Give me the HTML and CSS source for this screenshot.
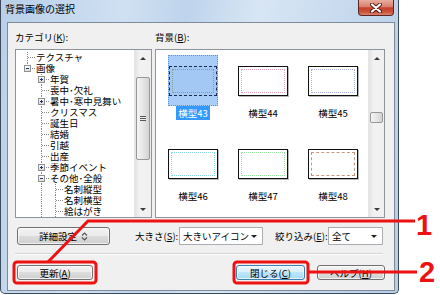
FILE: index.html
```html
<!DOCTYPE html>
<html lang="ja">
<head>
  <meta charset="UTF-8" />
  <title>背景画像の選択</title>
  <link rel="stylesheet" href="styles.css">
</head>
<body>
  <div class="window">
    <div class="titlebar">
      <span class="title">背景画像の選択</span>
      <span class="close">
        <svg width="14" height="10" viewBox="0 0 14 10"><path d="M3 1.5 L11 8.5 M11 1.5 L3 8.5" stroke="#4a1a14" stroke-width="4" stroke-linecap="round"/><path d="M3 1.5 L11 8.5 M11 1.5 L3 8.5" stroke="#fff" stroke-width="2.2" stroke-linecap="round"/></svg>
      </span>
    </div>

    <div class="client">
      <div class="panes">
        <div class="pane">
          <div class="label">カテゴリ(<u>K</u>):</div>
          <div class="box">
            <div class="tree">
              <div class="row"><i class="g tee"></i><span>テクスチャ</span></div>
              <div class="row"><i class="g end"><b class="exp minus"></b></i><span>画像</span></div>
              <div class="row"><i class="g"></i><i class="g tee"><b class="exp plus"></b></i><span>年賀</span></div>
              <div class="row"><i class="g"></i><i class="g tee"></i><span>喪中･欠礼</span></div>
              <div class="row"><i class="g"></i><i class="g tee"><b class="exp plus"></b></i><span>暑中･寒中見舞い</span></div>
              <div class="row"><i class="g"></i><i class="g tee"></i><span>クリスマス</span></div>
              <div class="row"><i class="g"></i><i class="g tee"></i><span>誕生日</span></div>
              <div class="row"><i class="g"></i><i class="g tee"></i><span>結婚</span></div>
              <div class="row"><i class="g"></i><i class="g tee"></i><span>引越</span></div>
              <div class="row"><i class="g"></i><i class="g tee"></i><span>出産</span></div>
              <div class="row"><i class="g"></i><i class="g tee"><b class="exp plus"></b></i><span>季節イベント</span></div>
              <div class="row"><i class="g"></i><i class="g tee"><b class="exp minus"></b></i><span>その他･全般</span></div>
              <div class="row"><i class="g"></i><i class="g pipe"></i><i class="g tee"></i><span>名刺縦型</span></div>
              <div class="row"><i class="g"></i><i class="g pipe"></i><i class="g tee"></i><span>名刺横型</span></div>
              <div class="row"><i class="g"></i><i class="g pipe"></i><i class="g tee"></i><span>絵はがき</span></div>
            </div>
            <div class="vscroll wide">
              <span class="arrow up"></span>
              <span class="track"><span class="thumb tree-thumb"><span class="grip"></span></span></span>
              <span class="arrow down"></span>
            </div>
          </div>
        </div>

        <div class="pane">
          <div class="label">背景(<u>B</u>):</div>
          <div class="box">
            <div class="thumbs">
              <div class="item sel">
                <div class="pic"><div class="frame"><span class="deco c43"></span></div></div>
                <div class="cap"><span>横型43</span></div>
              </div>
              <div class="item">
                <div class="pic"><div class="frame"><span class="deco c44"></span></div></div>
                <div class="cap"><span>横型44</span></div>
              </div>
              <div class="item">
                <div class="pic"><div class="frame"><span class="deco c45"></span></div></div>
                <div class="cap"><span>横型45</span></div>
              </div>
              <div class="item">
                <div class="pic"><div class="frame"><span class="deco c46"></span></div></div>
                <div class="cap"><span>横型46</span></div>
              </div>
              <div class="item">
                <div class="pic"><div class="frame"><span class="deco c47"></span></div></div>
                <div class="cap"><span>横型47</span></div>
              </div>
              <div class="item">
                <div class="pic"><div class="frame"><span class="deco c48"></span></div></div>
                <div class="cap"><span>横型48</span></div>
              </div>
            </div>
            <div class="vscroll">
              <span class="arrow up"></span>
              <span class="track"><span class="thumb list-thumb"></span></span>
              <span class="arrow down"></span>
            </div>
          </div>
        </div>
      </div>

      <div class="controls">
        <button class="btn btn-detail"><span>詳細設定</span>
          <svg width="7" height="9" viewBox="0 0 7 9"><path d="M1 3.5 L3.5 1 L6 3.5 M1 5.5 L3.5 8 L6 5.5" fill="none" stroke="#555" stroke-width="1.2"/></svg>
        </button>
        <span class="ctl-label">大きさ(<u>S</u>):</span>
        <span class="combo size"><span>大きいアイコン</span><i class="caret"></i></span>
        <span class="ctl-label filter">絞り込み(<u>E</u>):</span>
        <span class="combo filter-combo"><span>全て</span><i class="caret"></i></span>
      </div>

      <div class="separator"></div>

      <div class="actions">
        <button class="btn btn-refresh"><span>更新(<u>A</u>)</span></button>
        <button class="btn default btn-close"><span>閉じる(<u>C</u>)</span></button>
        <button class="btn btn-help"><span>ヘルプ(<u>H</u>)</span></button>
      </div>
    </div>
  </div>

  <!-- annotation marks -->
  <svg class="marks" width="440" height="295" viewBox="0 0 440 295">
    <rect x="14" y="262" width="82" height="21" rx="3" fill="none" stroke="#ee1111" stroke-width="3"/>
    <rect x="234" y="262" width="74" height="21" rx="3" fill="none" stroke="#ee1111" stroke-width="3"/>
    <polyline points="48,262 88,221 415,221" fill="none" stroke="#ee1111" stroke-width="3"/>
    <line x1="308" y1="272" x2="417" y2="272" stroke="#ee1111" stroke-width="3"/>
  </svg>
  <span class="num num-1">1</span>
  <span class="num num-2">2</span>
</body>
</html>
```

FILE: styles.css
```css
body {
  margin: 0;
  width: 440px;
  height: 295px;
  background: #fff;
  position: relative;
  overflow: hidden;
  font-family: "Noto Sans CJK JP", sans-serif;
  font-size: 9.5px;
  color: #000;
}
u {
  text-decoration: underline;
}
.window {
  width: 399px;
  height: 294px;
  box-sizing: border-box;
  border: 1px solid #3e4b5c;
  border-top: 0;
  border-radius: 0 0 5px 5px;
  background: linear-gradient(100deg, #b9cfe9 0%, #cfe0f2 28%, #bed4ec 42%, #d8e6f4 58%, #c6d9ee 78%, #b6cde8 100%);
}
.titlebar {
  height: 22px;
  display: flex;
  justify-content: space-between;
  align-items: flex-start;
  padding: 0 4px 0 4px;
}
.title {
  margin-top: 2px;
  font-size: 10px;
  line-height: 13px;
}
.close {
  width: 36px;
  height: 16px;
  box-sizing: border-box;
  border: 1px solid #5b2520;
  border-top: 0;
  border-radius: 0 0 4px 4px;
  background: linear-gradient(#e8ad9f 0%, #d8806d 45%, #c3412a 52%, #c9533c 80%, #dd8570 100%);
  display: flex;
  align-items: center;
  justify-content: center;
}
.client {
  margin: 0 3px 0 6px;
  height: 269px;
  box-sizing: border-box;
  border: 1px solid #7d8a99;
  background: #f0f0f0;
  padding: 8px 9px 0 7px;
}
.panes {
  display: grid;
  grid-template-columns: 137px 230px;
  column-gap: 3px;
}
.label {
  height: 18px;
  line-height: 12px;
}
.box {
  height: 169px;
  box-sizing: border-box;
  border: 1px solid #8e949c;
  background: #fff;
  display: flex;
}

/* tree */
.tree {
  flex: 1;
  overflow: hidden;
  padding: 2px 0 0 5px;
}
.row {
  display: flex;
  height: 11px;
  line-height: 11px;
  white-space: nowrap;
}
.row span {
  margin-left: 1px;
}
.g {
  flex: none;
  width: 14px;
  height: 11px;
  position: relative;
}
.g.tee {
  background:
    repeating-linear-gradient(to bottom, #8a8a8a 0 1px, transparent 1px 2px) 6px 0 / 1px 11px no-repeat,
    repeating-linear-gradient(to right, #8a8a8a 0 1px, transparent 1px 2px) 7px 5px / 7px 1px no-repeat;
}
.g.end {
  background:
    repeating-linear-gradient(to bottom, #8a8a8a 0 1px, transparent 1px 2px) 6px 0 / 1px 6px no-repeat,
    repeating-linear-gradient(to right, #8a8a8a 0 1px, transparent 1px 2px) 7px 5px / 7px 1px no-repeat;
}
.g.pipe {
  background: repeating-linear-gradient(to bottom, #8a8a8a 0 1px, transparent 1px 2px) 6px 0 / 1px 11px no-repeat;
}
.exp {
  position: absolute;
  left: 3px;
  top: 2px;
  width: 7px;
  height: 7px;
  box-sizing: border-box;
  border: 1px solid #8f8f8f;
  background: linear-gradient(#fff, #dcdcdc);
}
.exp::before,
.exp::after {
  content: "";
  position: absolute;
  background: #1f3a70;
}
.exp::before {
  left: 1px;
  top: 2px;
  width: 3px;
  height: 1px;
}
.exp.plus::after {
  left: 2px;
  top: 1px;
  width: 1px;
  height: 3px;
}

/* scrollbars */
.vscroll {
  flex: none;
  width: 15px;
  display: flex;
  flex-direction: column;
  background: linear-gradient(to right, #e2e2e2, #f2f2f2 30%, #f0f0f0);
  border-left: 1px solid #e6e6e6;
}
.vscroll.wide {
  width: 16px;
}
.arrow {
  height: 16px;
  flex: none;
  display: flex;
  align-items: center;
  justify-content: center;
}
.arrow::before {
  content: "";
  border-left: 3px solid transparent;
  border-right: 3px solid transparent;
}
.arrow.up::before {
  border-bottom: 3px solid #3a3a3a;
}
.arrow.down::before {
  border-top: 3px solid #3a3a3a;
}
.track {
  flex: 1;
  display: block;
}
.thumb {
  display: flex;
  align-items: center;
  justify-content: center;
  margin: 0 1px;
  box-sizing: border-box;
  border: 1px solid #979797;
  border-radius: 2px;
  background: linear-gradient(to right, #f4f4f4, #e6e6e6 50%, #d3d3d3);
}
.tree-thumb {
  margin-top: 11px;
  height: 83px;
}
.list-thumb {
  margin-top: 46px;
  height: 11px;
}
.grip {
  width: 6px;
  height: 5px;
  background: repeating-linear-gradient(to bottom, #555 0 1px, #eee 1px 2px);
}

/* thumbnails */
.thumbs {
  flex: 1;
  display: grid;
  grid-template-columns: repeat(3, 70px);
  grid-auto-rows: 83px;
  align-content: start;
  padding: 5px 0 0 2px;
  overflow: hidden;
}
.item {
  display: flex;
  flex-direction: column;
  align-items: center;
}
.pic {
  width: 50px;
  height: 51px;
  box-sizing: border-box;
  display: flex;
  align-items: center;
  justify-content: center;
}
.frame {
  width: 50px;
  height: 30px;
  box-sizing: border-box;
  border: 1px solid #111;
  background: #fff;
  padding: 2px;
  box-shadow: 1px 1px 0 #b8b8b8;
}
.deco {
  display: block;
  height: 100%;
  box-sizing: border-box;
  border: 1px dotted #ccc;
}
.c43 { border-color: #7fa08a; }
.c44 { border-color: #f0a0b8; }
.c45 { border-color: #aaaee6; }
.c46 { border-color: #86dede; }
.c47 { border-color: #98e49a; }
.c48 { border-color: #c8987e; border-style: dashed; }
.cap {
  margin-top: 2px;
  line-height: 11px;
}
.cap span {
  padding: 0 2px;
}
.item.sel .pic {
  background: #a9cdf6;
  border: 1px dotted #5f93d8;
}
.item.sel .frame {
  background: #a3c8f3;
  border: 1px dashed #1c2c50;
  box-shadow: none;
}
.item.sel .cap span {
  background: #3399ff;
  color: #fff;
}

/* bottom controls */
.controls {
  display: flex;
  align-items: center;
  height: 18px;
  margin-top: 9px;
}
.btn {
  box-sizing: border-box;
  border: 1px solid #707070;
  border-radius: 3px;
  background: linear-gradient(#f2f2f2 0%, #ebebeb 49%, #dddddd 50%, #cfcfcf 100%);
  box-shadow: inset 0 0 0 1px rgba(255,255,255,0.7);
  display: flex;
  align-items: center;
  justify-content: center;
  padding: 0;
  font: inherit;
  line-height: 12px;
  color: #000;
}
.btn svg {
  margin-left: 4px;
}
.btn.default {
  border-color: #3c7fb1;
  background: linear-gradient(#eaf6fd 0%, #d9f0fc 49%, #bee6fd 50%, #a7d9f5 100%);
}
.btn-detail {
  margin-left: 2px;
  width: 93px;
  height: 18px;
}
.ctl-label {
  margin-left: 25px;
  width: 44px;
  white-space: nowrap;
}
.ctl-label.filter {
  margin-left: 12px;
  width: 53px;
}
.combo {
  height: 18px;
  box-sizing: border-box;
  border: 1px solid #abadb3;
  background: #fff;
  display: flex;
  align-items: center;
  justify-content: space-between;
  padding: 0 5px 0 3px;
}
.combo.size {
  width: 84px;
}
.combo.filter-combo {
  width: 55px;
}
.caret {
  border-left: 3px solid transparent;
  border-right: 3px solid transparent;
  border-top: 3px solid #222;
}
.separator {
  margin-top: 8px;
  width: 368px;
  border-top: 1px solid #d5d5d5;
  border-bottom: 1px solid #fff;
}
.actions {
  display: flex;
  margin-top: 10px;
}
.actions .btn {
  height: 15px;
}
.btn-refresh {
  margin-left: 2px;
  width: 76px;
}
.btn-close {
  margin-left: 143px;
  width: 69px;
}
.btn-help {
  margin-left: 12px;
  width: 68px;
}

/* annotations */
.marks {
  position: absolute;
  left: 0;
  top: 0;
  pointer-events: none;
}
.num {
  position: absolute;
  font-family: "Liberation Sans", sans-serif;
  font-weight: bold;
  font-size: 29px;
  line-height: 29px;
  color: #ee1111;
}
.num-1 {
  left: 416px;
  top: 211px;
}
.num-2 {
  left: 419px;
  top: 258px;
}
```
